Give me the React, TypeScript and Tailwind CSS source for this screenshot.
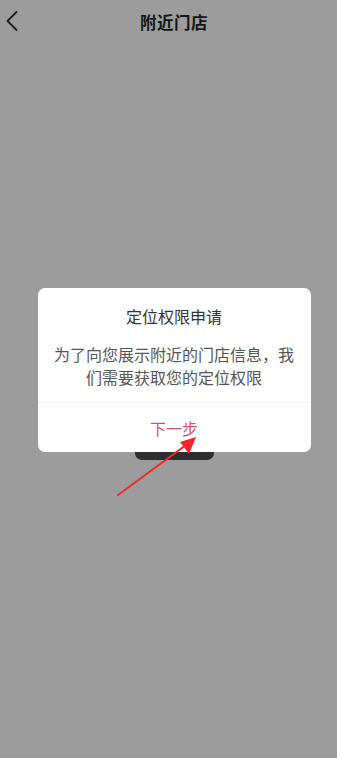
import { useState } from "react";

function BackIcon() {
  return (
    <svg width="24" height="24" viewBox="0 0 24 24" fill="none">
      <path
        d="M12.5 2 L3.5 11 L12.5 20"
        stroke="#1f1f1f"
        strokeWidth="1.8"
        strokeLinecap="round"
        strokeLinejoin="round"
      />
    </svg>
  );
}

function PointerArrow() {
  // red annotation arrow pointing at the button
  return (
    <svg
      className="absolute left-0 top-0 pointer-events-none"
      width="337"
      height="758"
      viewBox="0 0 337 758"
    >
      <line x1="118" y1="495" x2="186" y2="445" stroke="#f2262b" strokeWidth="2" strokeLinecap="round" />
      <polygon points="196,437 180,442 189,454" fill="#f2262b" />
    </svg>
  );
}

export default function App() {
  const [open, setOpen] = useState(true);

  return (
    <div
      className="relative w-[337px] h-[758px] overflow-hidden bg-[#9c9c9c]"
      style={{ fontFamily: '"Noto Sans CJK SC", "Noto Sans", sans-serif' }}
    >
      {/* page under the mask */}
      <div className="flex flex-col">
        <div className="relative h-[44px] flex items-center justify-center pl-[11px]">
          <div className="absolute left-[4px] top-[10px]">
            <BackIcon />
          </div>
          <h1 className="text-[16.5px] font-bold text-[#151515] tracking-[0.5px]">附近门店</h1>
        </div>
        <div className="flex justify-center pt-[386px] pl-[12px]">
          <button className="w-[79px] h-[30px] rounded-[7px] bg-[#2e2e2e]" />
        </div>
      </div>

      {/* permission dialog */}
      {open && (
        <div className="absolute inset-0 flex justify-center pt-[288px] pl-[11px]">
          <div className="w-[273px] h-fit bg-white rounded-[7px] overflow-hidden flex flex-col">
            <div className="px-[14px] pt-4 pb-[13px] text-center">
              <p className="text-[16px] leading-[24px] text-[#333333]">定位权限申请</p>
              <p className="mt-[15px] text-[16px] leading-[23px] text-[#555555]">
                为了向您展示附近的门店信息，我们需要获取您的定位权限
              </p>
            </div>
            <div className="h-px bg-[#f2f2f2]" />
            <button
              className="h-[49px] flex items-center justify-center text-[16px] text-[#d6506d]"
              onClick={() => setOpen(false)}
            >
              下一步
            </button>
          </div>
        </div>
      )}

      <PointerArrow />
    </div>
  );
}
